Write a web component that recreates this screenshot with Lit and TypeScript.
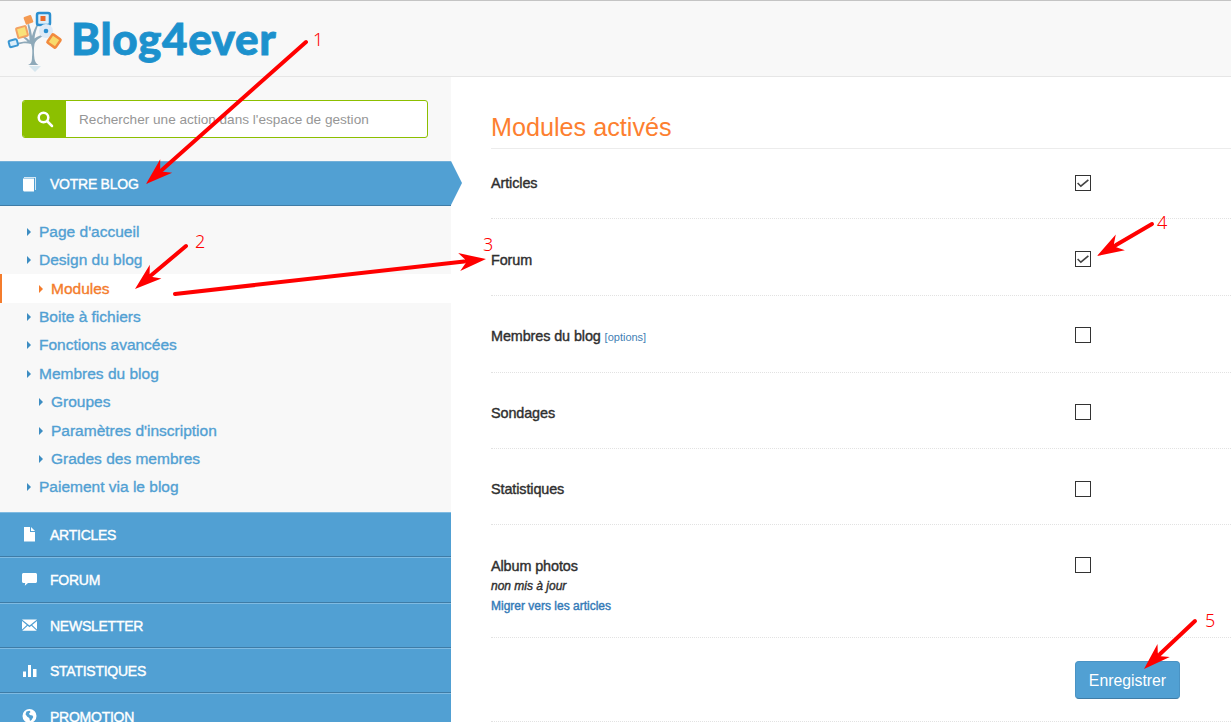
import { LitElement, html, css, svg } from "lit";
import { customElement } from "lit/decorators.js";

const icons: Record<string, unknown> = {
  book: svg`<path d="M3 2h12v13h-1V3H3z" opacity=".75"/><path d="M2 3.500h11v13H3.500C2.700 16.500 2 15.800 2 15z"/>`,
  file: svg`<path d="M3 1h6v5h5v9.500H3zM10 1l4 4h-4z"/>`,
  comment: svg`<path d="M2.500 2h12c.8 0 1.500.7 1.500 1.500v7c0 .8-.7 1.500-1.500 1.500H7l-3.200 2.800.4-2.800H2.500C1.700 12 1 11.300 1 10.500v-7C1 2.700 1.700 2 2.500 2z"/>`,
  mail: svg`<path d="M1 2.500h15L8.500 8.500zM1 4l4.800 4L1 12.500zM16 4v8.500L11.200 8zM6.700 8.800l1.800 1.500 1.800-1.500 5.500 5H1.200z"/>`,
  chart: svg`<path d="M2 9.500h3V15H2zM7 3h3v12H7zM12 7h3.500v8H12z"/>`,
  globe: svg`<path fill-rule="evenodd" d="M8.500 1a7 7 0 1 0 0 14 7 7 0 0 0 0-14zM5.500 3.500l3-.8 1 1.300-1.500 1.500.8 1.500 2.700.5.800 1.500-1.800 3-1.500 1-.7-3-2-1.200-1.800-2.500z"/>`,
};

function arrow(x1: number, y1: number, x2: number, y2: number) {
  const dx = x2 - x1, dy = y2 - y1, len = Math.hypot(dx, dy);
  const ux = dx / len, uy = dy / len, px = -uy, py = ux;
  const at = (back: number, side: number) =>
    `${(x2 - ux * back + px * side).toFixed(1)},${(y2 - uy * back + py * side).toFixed(1)}`;
  const points = [at(0, 0), at(27, 9), at(21, 2.2), at(21, -2.2), at(27, -9)].join(" ");
  const ex = x2 - ux * 22, ey = y2 - uy * 22;
  return svg`<line x1=${x1} y1=${y1} x2=${ex} y2=${ey} stroke="#f00" stroke-width="4" stroke-linecap="round"/><polygon points=${points} fill="#f00"/>`;
}

const subLinks: [string, number, boolean?][] = [
  ["Page d'accueil", 0],
  ["Design du blog", 0],
  ["Modules", 1, true],
  ["Boite à fichiers", 0],
  ["Fonctions avancées", 0],
  ["Membres du blog", 0],
  ["Groupes", 1],
  ["Paramètres d'inscription", 1],
  ["Grades des membres", 1],
  ["Paiement via le blog", 0],
];

const navItems: [string, string][] = [
  ["ARTICLES", "file"],
  ["FORUM", "comment"],
  ["NEWSLETTER", "mail"],
  ["STATISTIQUES", "chart"],
  ["PROMOTION", "globe"],
];

// label, checked, row height, space above the checkbox, space above the label
const modules: [string, boolean, number, number, number][] = [
  ["Articles", true, 70, 26, 26],
  ["Forum", true, 77, 32, 33],
  ["Membres du blog", false, 77, 31, 32],
  ["Sondages", false, 76, 31, 32],
  ["Statistiques", false, 76, 32, 32],
  ["Album photos", false, 113, 32, 33],
];

const notes: [string, number, number][] = [
  ["1", 313, 46],
  ["2", 195, 248],
  ["3", 483, 251],
  ["4", 1157, 229],
  ["5", 1205, 627],
];

@customElement("app-root")
export class AppRoot extends LitElement {
  static styles = css`
    :host {
      display: block;
      position: relative;
      height: 722px;
      overflow: hidden;
      background: #fff;
      font-family: "Liberation Sans", Arial, sans-serif;
      color: #2f2f2f;
    }
    .header {
      height: 75px;
      box-sizing: content-box;
      border-top: 1px solid #c4c4c4;
      border-bottom: 1px solid #e6e6e6;
      background: #f8f8f8;
      display: flex;
      align-items: flex-start;
    }
    .tree { flex: none; }
    .brand {
      margin: 12px 0 0 -1px;
      font-family: "Lato", sans-serif;
      font-weight: 900;
      font-size: 44px;
      line-height: 50px;
      letter-spacing: 0.6px;
      color: #1c91cd;
      -webkit-text-stroke: 0.8px currentColor;
    }
    .body { display: flex; height: 645px; }
    .side { width: 451px; flex: none; background: #f8f8f8; }
    .search {
      display: flex;
      height: 38px;
      width: 406px;
      box-sizing: border-box;
      margin: 23px 0 23px 22px;
      border: 1px solid #8cbf00;
      border-radius: 3px;
      background: #fff;
      overflow: hidden;
    }
    .search-btn {
      width: 43px;
      background: #8cc000;
      display: flex;
      align-items: center;
      justify-content: center;
    }
    .search-txt {
      padding-left: 13px;
      font-size: 13.600px;
      line-height: 37px;
      color: #969696;
    }
    .nav {
      position: relative;
      display: flex;
      align-items: center;
      box-sizing: border-box;
      height: 45.400px;
      padding: 1px 0 0 21px;
      background: #51a0d3;
      color: #fff;
      border-top: 1px solid #7fbbe2;
      border-bottom: 1px solid #3f7ca6;
      font-size: 14px;
      -webkit-text-stroke: 0.4px currentColor;
      letter-spacing: -0.25px;
    }
    .nav svg { width: 17px; height: 17px; fill: #fff; margin: -1px 12px 0 0; flex: none; }
    .nav.first { height: 45px; padding-top: 0; border-top-color: #73b0d9; }
    .nav.first svg { margin-top: 0; }
    .nav.first::after {
      content: "";
      position: absolute;
      left: 100%;
      top: -1px;
      border-left: 11px solid #51a0d3;
      border-top: 22.500px solid transparent;
      border-bottom: 22.500px solid transparent;
    }
    .subs { padding: 11.700px 0 10.300px; }
    .sub {
      display: flex;
      align-items: center;
      height: 28.400px;
      padding-left: 27px;
      font-size: 15.500px;
      color: #51a0d3;
      -webkit-text-stroke: 0.35px currentColor;
    }
    .sub.deep { padding-left: 39px; }
    .sub.on { background: #fff; color: #f47c2c; box-shadow: inset 2px 0 0 #f47c2c; }
    .tri {
      width: 0;
      height: 0;
      margin-right: 8px;
      border-left: 4px solid #3d8dc2;
      border-top: 4px solid transparent;
      border-bottom: 4px solid transparent;
    }
    .sub.on .tri { border-left-color: #f47c2c; }
    .main { flex: 1; padding: 0 0 0 40px; min-width: 0; }
    h1 {
      margin: 0;
      height: 72px;
      box-sizing: border-box;
      padding-top: 35px;
      border-bottom: 1px solid #ececec;
      font-size: 25.200px;
      line-height: 30px;
      font-weight: 400;
      color: #fd7f30;
    }
    .row {
      display: flex;
      box-sizing: border-box;
      border-bottom: 1px dotted #e2e2e2;
    }
    .label {
      width: 584px;
      flex: none;
      font-size: 14.400px;
      line-height: 16px;
      -webkit-text-stroke: 0.4px currentColor;
      letter-spacing: -0.1px;
    }
    .opt { font-size: 11px; color: #3f7fb5; -webkit-text-stroke: 0; letter-spacing: 0; }
    .old { font-size: 12px; font-style: italic; line-height: 20px; margin-top: 2px; letter-spacing: 0; }
    .mig { font-size: 12px; line-height: 20px; color: #337ab7; letter-spacing: 0; }
    .check {
      width: 16px;
      height: 16px;
      box-sizing: border-box;
      border: 1.500px solid #333;
      display: flex;
      background: #fff;
    }
    .check svg { width: 14px; height: 14px; }
    .foot {
      height: 84px;
      padding: 23px 0 0 584px;
      box-sizing: border-box;
      border-bottom: 1px dotted #e2e2e2;
    }
    .save {
      display: block;
      width: 105px;
      height: 38px;
      padding: 1px 0 0;
      box-sizing: border-box;
      border: 1px solid #4a93c4;
      border-bottom-color: #3f7ca6;
      border-radius: 4px;
      background: #51a0d3;
      color: #fff;
      font-family: inherit;
      font-size: 15.800px;
    }
    .marks { position: absolute; inset: 0; pointer-events: none; }
    .note {
      font-family: "Noto Sans", sans-serif;
      font-size: 18px;
      font-weight: 300;
      fill: #f00;
    }
  `;

  render() {
    return html`
      <div class="header">
        <svg class="tree" width="72" height="74" viewBox="0 1 72 74">
          <path d="M28 65c3-1 4-3 4-8 .5-5 .5-9-1-13-4-1-9-1-14 1l-.5-1.500c3-1.500 7-2 11-2-2-2-4-4-6-5l1-1c3 1 5 3 7 5 0-6-1-11-2-16l1.500-.5c1.500 4 2.500 8 3 12 1-4 3-8 5-12l1.500.5c-2 4-3.500 9-4 14 3-2 6-3.500 9-4l.5 1.500c-4 1.500-8 4-9.500 8-1 5-.5 11 0 15 .5 3 2 5 4 6z" fill="#8ea9b9"/>
          <path d="M29 66h12l-6 6z" fill="#d6e6ee"/>
          <rect x="37" y="13" width="13" height="12" rx="2" fill="#dceefa" stroke="#2b8fd0" stroke-width="2.500"/>
          <rect x="40.500" y="16" width="5" height="5" fill="#ea6a2a"/>
          <rect x="24.500" y="16" width="8" height="8" rx="1" fill="#f49a52" transform="rotate(-20 28 20)"/>
          <rect x="17" y="27" width="10" height="10" rx="1" fill="#f8e27a" stroke="#f3a263" stroke-width="2" transform="rotate(-15 22 32)"/>
          <circle cx="46" cy="31" r="7" fill="#dfeaf6"/><circle cx="46" cy="31" r="2.300" fill="#2b8fd0"/>
          <rect x="49" y="36" width="10" height="10" rx="1" fill="#f8da6c" stroke="#f28a3e" stroke-width="2.500" transform="rotate(35 54 41)"/>
          <rect x="9" y="40" width="8.500" height="6.500" rx="1.500" fill="#dceefa" stroke="#3b97d3" stroke-width="2" transform="rotate(-15 13 43)"/>
        </svg>
        <div class="brand">Blog4ever</div>
      </div>
      <div class="body">
        <div class="side">
          <div class="search">
            <div class="search-btn">
              <svg width="18" height="18" viewBox="0 0 18 18" fill="none" stroke="#fff" stroke-width="2.500">
                <circle cx="7.500" cy="7.500" r="4.800"/><path d="M11 11l5 5" stroke-linecap="round"/>
              </svg>
            </div>
            <div class="search-txt">Rechercher une action dans l'espace de gestion</div>
          </div>
          <div class="nav first">
            <svg viewBox="0 0 17 17">${icons.book}</svg>VOTRE BLOG
          </div>
          <div class="subs">
            ${subLinks.map(
              ([t, d, on]) => html`<div class="sub ${d ? "deep" : ""} ${on ? "on" : ""}"><span class="tri"></span>${t}</div>`
            )}
          </div>
          ${navItems.map(
            ([t, i]) => html`<div class="nav"><svg viewBox="0 0 17 17">${icons[i]}</svg>${t}</div>`
          )}
        </div>
        <div class="main">
          <h1>Modules activés</h1>
          ${modules.map(
            ([t, c, h, boxTop, textTop], i) => html`<div class="row" style="height:${h}px">
              <div class="label" style="padding-top:${textTop}px">
                ${t}${i === 2 ? html` <span class="opt">[options]</span>` : ""}
                ${i === 5
                  ? html`<div class="old">non mis à jour</div><div class="mig">Migrer vers les articles</div>`
                  : ""}
              </div>
              <div class="check" style="margin-top:${boxTop}px">
                ${c
                  ? html`<svg viewBox="0 0 13 13" fill="none" stroke="#444" stroke-width="1.500"><path d="M1.500 6.500l3 3 7-6"/></svg>`
                  : ""}
              </div>
            </div>`
          )}
          <div class="foot"><button class="save">Enregistrer</button></div>
        </div>
      </div>
      <svg class="marks" width="1231" height="722" viewBox="0 0 1231 722">
        ${arrow(306, 42, 146, 184)}
        ${arrow(186, 246, 135, 289)}
        ${arrow(175, 294, 486, 259)}
        ${arrow(1152, 224, 1097, 256)}
        ${arrow(1195, 621, 1144, 669)}
        ${notes.map(([n, x, y]) => svg`<text class="note" x=${x} y=${y}>${n}</text>`)}
      </svg>
    `;
  }
}
